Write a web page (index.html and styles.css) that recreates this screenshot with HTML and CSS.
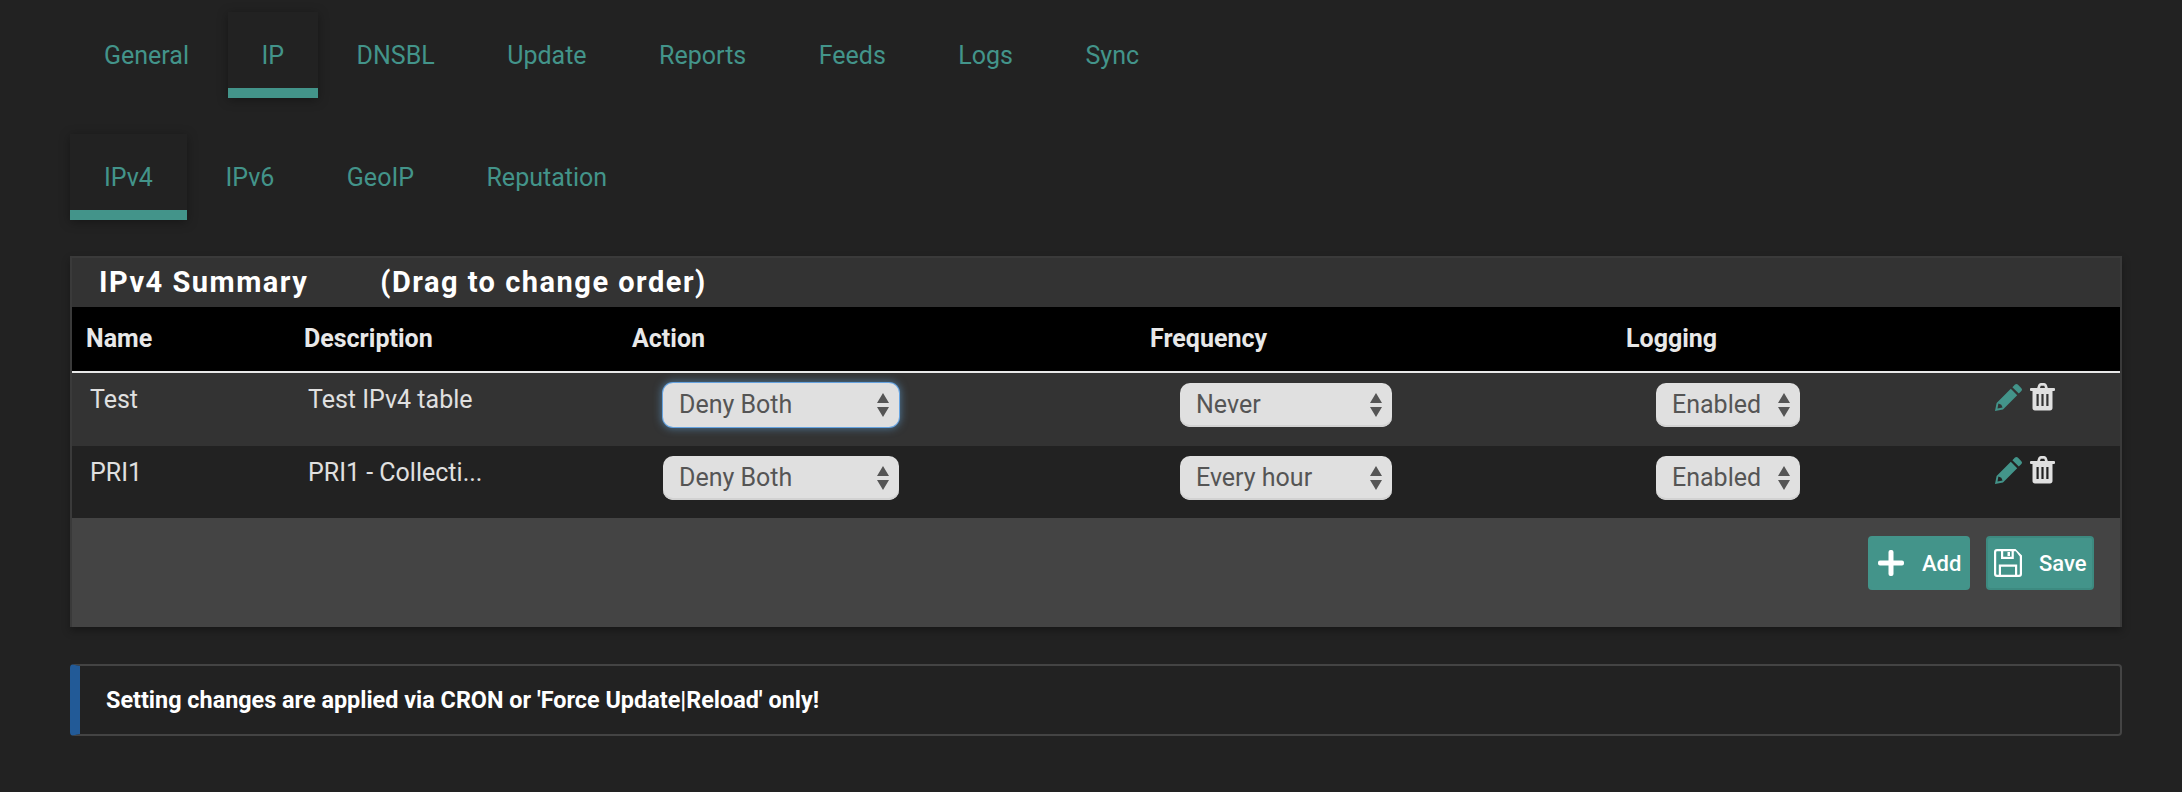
FILE: index.html
```html
<!DOCTYPE html>
<html lang="en">
<head>
<meta charset="utf-8">
<title>pfBlockerNG IPv4</title>
<link rel="stylesheet" href="styles.css">
</head>
<body>
<nav class="tabs">
  <a class="tab">General</a><a class="tab active">IP</a><a class="tab">DNSBL</a><a class="tab">Update</a><a class="tab">Reports</a><a class="tab">Feeds</a><a class="tab">Logs</a><a class="tab">Sync</a>
</nav>
<nav class="tabs sub">
  <a class="tab active">IPv4</a><a class="tab">IPv6</a><a class="tab">GeoIP</a><a class="tab">Reputation</a>
</nav>
<section class="panel">
  <h2 class="panel-title"><span>IPv4 Summary</span><span>(Drag to change order)</span></h2>
  <table class="grid">
    <colgroup><col class="c-name"><col class="c-desc"><col class="c-action"><col class="c-freq"><col class="c-log"><col></colgroup>
    <thead><tr><th>Name</th><th>Description</th><th>Action</th><th>Frequency</th><th>Logging</th><th></th></tr></thead>
    <tbody>
      <tr class="odd">
        <td>Test</td><td>Test IPv4 table</td>
        <td><div class="select s-action focus"><span>Deny Both</span><svg class="updown" viewBox="0 0 12 24"><path d="M6 0l6 10H0zM0 14h12L6 24z"/></svg></div></td>
        <td><div class="select s-freq"><span>Never</span><svg class="updown" viewBox="0 0 12 24"><path d="M6 0l6 10H0zM0 14h12L6 24z"/></svg></div></td>
        <td><div class="select s-log"><span>Enabled</span><svg class="updown" viewBox="0 0 12 24"><path d="M6 0l6 10H0zM0 14h12L6 24z"/></svg></div></td>
        <td><div class="acts">
          <svg class="ic-pencil" viewBox="0 0 28 28"><path d="M20 1.6a2 2 0 0 1 2.8 0l3.6 3.6a2 2 0 0 1 0 2.8l-2.6 2.6-6.4-6.4zM15.8 5.8l6.4 6.4L8 26.4 0 28l1.600-8zM3.400 20.400l-.9 5.100 5.100-.9-1.300-2.900z"/></svg>
          <svg class="ic-trash" viewBox="0 0 25 28"><path fill-rule="evenodd" d="M8 2.500C8.500 1 9.500 0 11 0h3c1.500 0 2.500 1 3 2.500l.8 2.500H24a1 1 0 0 1 1 1v1a1 1 0 0 1-1 1h-1.500v17c0 1.500-1 2.500-2.500 2.500H5c-1.500 0-2.500-1-2.500-2.500V8H1a1 1 0 0 1-1-1V6a1 1 0 0 1 1-1h6.200zM10 5h5l-.7-2.200h-3.600zM6.500 11v12h2.200V11zM11.400 11v12h2.200V11zM16.300 11v12h2.200V11z"/></svg>
        </div></td>
      </tr>
      <tr class="even">
        <td>PRI1</td><td>PRI1 - Collecti...</td>
        <td><div class="select s-action"><span>Deny Both</span><svg class="updown" viewBox="0 0 12 24"><path d="M6 0l6 10H0zM0 14h12L6 24z"/></svg></div></td>
        <td><div class="select s-freq"><span>Every hour</span><svg class="updown" viewBox="0 0 12 24"><path d="M6 0l6 10H0zM0 14h12L6 24z"/></svg></div></td>
        <td><div class="select s-log"><span>Enabled</span><svg class="updown" viewBox="0 0 12 24"><path d="M6 0l6 10H0zM0 14h12L6 24z"/></svg></div></td>
        <td><div class="acts">
          <svg class="ic-pencil" viewBox="0 0 28 28"><path d="M20 1.6a2 2 0 0 1 2.8 0l3.6 3.6a2 2 0 0 1 0 2.8l-2.6 2.6-6.4-6.4zM15.8 5.8l6.4 6.4L8 26.4 0 28l1.600-8zM3.400 20.400l-.9 5.100 5.100-.9-1.300-2.900z"/></svg>
          <svg class="ic-trash" viewBox="0 0 25 28"><path fill-rule="evenodd" d="M8 2.500C8.500 1 9.500 0 11 0h3c1.500 0 2.500 1 3 2.500l.8 2.500H24a1 1 0 0 1 1 1v1a1 1 0 0 1-1 1h-1.500v17c0 1.500-1 2.500-2.500 2.500H5c-1.500 0-2.500-1-2.500-2.500V8H1a1 1 0 0 1-1-1V6a1 1 0 0 1 1-1h6.200zM10 5h5l-.7-2.200h-3.600zM6.500 11v12h2.200V11zM11.400 11v12h2.200V11zM16.300 11v12h2.200V11z"/></svg>
        </div></td>
      </tr>
    </tbody>
  </table>
  <div class="panel-foot">
    <button class="btn btn-add"><svg class="ic-plus" viewBox="0 0 26 26"><path d="M10.500 2a2 2 0 0 1 2-2h1a2 2 0 0 1 2 2v8.500H24a2 2 0 0 1 2 2v1a2 2 0 0 1-2 2h-8.500V24a2 2 0 0 1-2 2h-1a2 2 0 0 1-2-2v-8.500H2a2 2 0 0 1-2-2v-1a2 2 0 0 1 2-2h8.500z"/></svg><span>Add</span></button>
    <button class="btn btn-save"><svg class="ic-save" viewBox="0 0 28 28"><path fill-rule="evenodd" d="M3 0h18.500L28 6.500V25a3 3 0 0 1-3 3H3a3 3 0 0 1-3-3V3a3 3 0 0 1 3-3zM2.200 3v22a.8.8 0 0 0 .8.8h1.800V15.500h18.400v10.300H25a.8.800 0 0 0 .8-.8V7.400l-4-5.200h-2V10H7V2.200H3a.8.8 0 0 0-.8.8zM9.200 2.200v5.600h8.400V2.200zM13.500 3h2.500v4h-2.500zM7 17.700v8.100h14v-8.100z"/></svg><span>Save</span></button>
  </div>
</section>
<aside class="callout">Setting changes are applied via CRON or 'Force Update|Reload' only!</aside>
</body>
</html>
```
FILE: styles.css
```css
* { box-sizing: border-box; }
html, body { margin: 0; }
body {
  background: #222;
  color: #e0e0e0;
  font-family: Roboto, "Liberation Sans", sans-serif;
  font-size: 25px;
  padding: 12px 60px 0 70px;
  height: 792px;
  overflow: hidden;
}
.tabs { display: flex; gap: 4.5px; height: 86px; }
.tabs.sub { margin-top: 36px; }
.tab {
  color: #43948a;
  padding: 27px 34px 15px;
  line-height: 34px;
  height: 86px;
  border-bottom: 10px solid transparent;
}
.tab.active {
  border-bottom-color: #43948a;
  box-shadow: 0 2px 10px rgba(0,0,0,.35);
}
.panel {
  margin-top: 36px;
  border: 2px solid #3a3a3a;
  border-bottom: 0;
  height: 371px;
  background: #444;
  box-shadow: 0 4px 8px rgba(0,0,0,.3);
}
.panel-title {
  margin: 0;
  height: 49px;
  background: #333;
  color: #fff;
  font-size: 29px;
  font-weight: 700;
  letter-spacing: 1.5px;
  line-height: 49px;
  padding-left: 27px;
  display: flex;
  gap: 72px;
}
.grid { width: 100%; table-layout: fixed; border-collapse: collapse; }
.c-name { width: 218px; }
.c-desc { width: 328px; }
.c-action { width: 518px; }
.c-freq { width: 476px; }
.c-log { width: 363px; }
.grid th {
  background: #000;
  color: #e8e8e8;
  text-align: left;
  font-weight: 700;
  height: 65px;
  padding: 0 0 0 14px;
  border-bottom: 2px solid #e8e8e8;
  line-height: 62px;
}
.grid td {
  padding: 10px 0 0 18px;
  vertical-align: top;
  background: #222;
  line-height: 34px;
}
.grid tr.odd td { background: #333; height: 74px; }
.grid tr.even td { height: 72px; }
.select {
  margin-left: 27px;
  height: 44px;
  border-radius: 10px;
  background: #e0e0e0;
  box-shadow: inset 0 -2px 0 #d2d2d2;
  color: #555;
  display: flex;
  align-items: center;
  justify-content: space-between;
  padding: 0 10px 0 16px;
}
.select.focus {
  box-shadow: 0 0 0 1px #66a3e0, 0 0 8px 1px rgba(102,175,233,.6);
}
.s-action { width: 236px; }
.s-freq { width: 212px; margin-left: 26px; }
.s-log { width: 144px; margin-left: 26px; }
.updown { width: 12px; height: 24px; fill: #555; }
.acts { display: flex; gap: 7px; margin: 0 0 0 2px; }
.ic-pencil { width: 28px; height: 28px; fill: #43948a; }
.ic-trash { width: 25px; height: 28px; fill: #e0e0e0; }
.panel-foot {
  display: flex;
  justify-content: flex-end;
  gap: 16px;
  padding: 18px 26px 0 0;
}
.btn {
  height: 54px;
  border: 2px solid #43948a;
  border-radius: 4px;
  background: #43948a;
  color: #fff;
  font: 500 22px Roboto, "Liberation Sans", sans-serif;
  display: flex;
  align-items: center;
  padding: 0;
}
.btn-add { width: 102px; padding-left: 8px; gap: 18px; }
.btn-save { width: 108px; padding-left: 6px; gap: 17px; border-color: #3d8a80; }
.ic-plus { width: 26px; height: 26px; fill: #fff; }
.ic-save { width: 28px; height: 28px; fill: #fff; }
.callout {
  margin-top: 37px;
  height: 72px;
  border: 2px solid #444;
  border-left: 10px solid #225a97;
  border-radius: 4px;
  padding-left: 26px;
  color: #fff;
  font-size: 23.4px;
  font-weight: 700;
  line-height: 68px;
}
```
